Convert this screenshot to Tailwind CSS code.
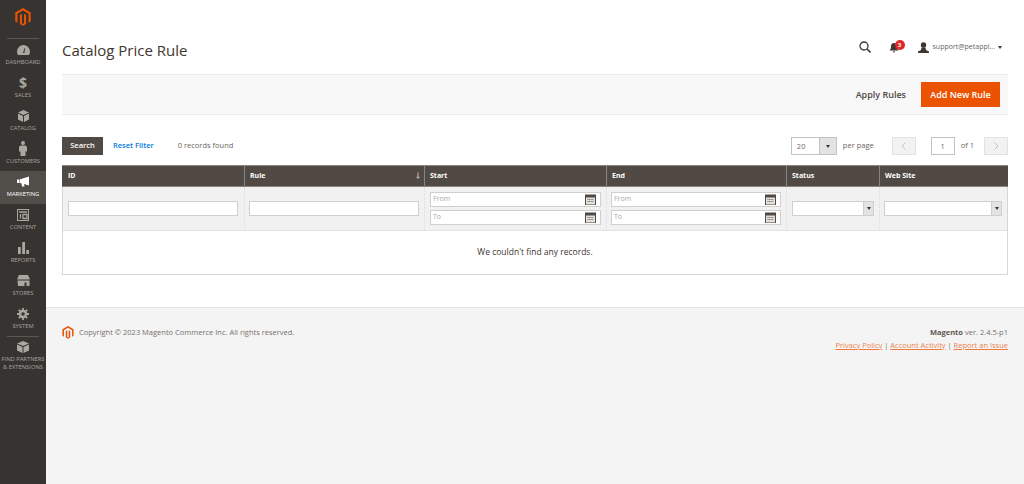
<!DOCTYPE html>
<html lang="en">
<head>
<meta charset="UTF-8">
<title>Catalog Price Rule</title>
<script src="https://cdn.jsdelivr.net/npm/@tailwindcss/browser@4"></script>
</head>
<body class="font-['Open_Sans',sans-serif] bg-white">
<div class="flex h-[484px] w-[1024px] overflow-hidden">
  <!-- Sidebar -->
  <aside class="w-[46px] h-full shrink-0 bg-[#373330] flex flex-col text-[#aaa6a0] text-[5.800px] leading-[8px] text-center">
    <div class="h-[39px] mx-[7px] border-b border-[#5a5652] flex justify-center pt-[8px]">
      <svg class="w-[16px] h-[18px]" viewBox="0 0 24 28" fill="#eb5202"><path d="M12 0L0 7v14l3.300 1.900V8.900L12 3.900l8.700 5v14L24 21V7z"/><path d="M13.600 23.900L12 24.800l-1.600-.9V8.900L7.200 10.800v14L12 27.600l4.800-2.800v-14l-3.200-1.900z"/></svg>
    </div>
    <div class="h-[33px] flex flex-col items-center justify-end pb-[6px]">
      <svg class="w-[13px] h-[10px] mb-[3px]" viewBox="0 0 13 10" fill="#aaa6a0"><path d="M6.500 0A6.500 6.500 0 0 0 0 6.500C0 8 .5 9 1 10h11c.5-1 1-2 1-3.500A6.500 6.500 0 0 0 6.500 0zM6 8L7.500 3 8 3 7.500 8z"/></svg>
      <span>DASHBOARD</span>
    </div>
    <div class="h-[33px] flex flex-col items-center justify-end pb-[6px]">
      <span class="text-[14px] leading-[14px] font-bold mb-[1px]">$</span>
      <span>SALES</span>
    </div>
    <div class="h-[33px] flex flex-col items-center justify-end pb-[6px]">
      <svg class="w-[11px] h-[12px] mb-[2px]" viewBox="0 0 11 12" fill="#aaa6a0"><path d="M5.500 0L0 2.500l5.500 2.500L11 2.500zM0 3.500V9.500L5 12V6zM11 3.500V9.500L6 12V6z"/></svg>
      <span>CATALOG</span>
    </div>
    <div class="h-[33px] flex flex-col items-center justify-end pb-[6px]">
      <svg class="w-[8px] h-[15px] mb-[1px]" viewBox="0 0 8 15" fill="#aaa6a0"><circle cx="4" cy="2" r="2"/><path d="M1.500 4.500h5L8 6v4.500H6.500V15h-5v-4.500H0V6z"/></svg>
      <span>CUSTOMERS</span>
    </div>
    <div class="h-[33px] bg-[#514d49] text-white flex flex-col items-center justify-end pb-[6px]">
      <svg class="w-[13px] h-[11px] mb-[3px]" viewBox="0 0 13 11" fill="#fff"><path d="M0 3.500h2V7H0zM2.500 3.500L12 .5v9L7 8l.5 2.500H5L4.500 7.300 2.500 7z"/></svg>
      <span>MARKETING</span>
    </div>
    <div class="h-[33px] flex flex-col items-center justify-end pb-[6px]">
      <svg class="w-[12px] h-[12px] mb-[2px]" viewBox="0 0 12 12" fill="none" stroke="#aaa6a0"><rect x=".5" y=".5" width="11" height="11"/><path d="M2 3h8M3.500 5v4.500M6 5.500h4V9.500H6z" stroke-width="1.300"/></svg>
      <span>CONTENT</span>
    </div>
    <div class="h-[33px] flex flex-col items-center justify-end pb-[6px]">
      <svg class="w-[11px] h-[12px] mb-[2px]" viewBox="0 0 11 12" fill="#aaa6a0"><path d="M0 5h2.800v7H0zM4.200 0H7v12H4.200zM8.300 8H11v4H8.300z"/></svg>
      <span>REPORTS</span>
    </div>
    <div class="h-[33px] flex flex-col items-center justify-end pb-[6px]">
      <svg class="w-[13px] h-[11px] mb-[3px]" viewBox="0 0 13 11" fill="#aaa6a0"><path d="M2 0h9l2 4.500H0zM.5 5.500h12V11h-3V7.500h-2V11h-6.500z"/></svg>
      <span>STORES</span>
    </div>
    <div class="h-[33px] flex flex-col items-center justify-end pb-[6px]">
      <svg class="w-[12px] h-[12px] mb-[2px]" viewBox="0 0 12 12" fill="none" stroke="#aaa6a0"><circle cx="6" cy="6" r="3" stroke-width="2.400"/><path d="M6 0v2.500M6 9.500V12M0 6h2.500M9.500 6H12M1.800 1.800l1.800 1.800M8.400 8.400l1.800 1.800M1.800 10.200l1.800-1.800M8.400 3.600l1.800-1.800" stroke-width="1.800"/></svg>
      <span>SYSTEM</span>
    </div>
    <div class="mx-[7px] border-t border-[#5a5652]"></div>
    <div class="flex flex-col items-center pt-[4px]">
      <svg class="w-[12px] h-[12px] mb-[2px]" viewBox="0 0 12 12" fill="#aaa6a0"><path d="M6 0L0 2.500l6 2.500 6-2.500zM0 3.500V9.500L5.500 12V6zM12 3.500V9.500L6.500 12V6z"/></svg>
      <span>FIND PARTNERS</span>
      <span>&amp; EXTENSIONS</span>
    </div>
  </aside>

  <!-- Main -->
  <main class="w-[978px] shrink-0 flex flex-col">
    <div class="px-[16px] flex-none">
      <header class="h-[74px] flex items-center justify-between pt-[20px]">
        <h1 class="text-[15px] leading-[24px] text-[#41362f] mt-[6px]">Catalog Price Rule</h1>
        <div class="flex items-center pr-[6px]">
          <svg class="w-[12px] h-[12px] mr-[18px]" viewBox="0 0 12 12" fill="none" stroke="#41362f" stroke-width="1.300"><circle cx="5" cy="5" r="4"/><path d="M8 8l3.500 3.500" stroke-width="1.600"/></svg>
          <div class="relative w-[17px] mr-[12px] h-[12px]">
            <svg class="w-[10px] h-[10px] absolute left-0 top-[2px]" viewBox="0 0 10 10" fill="#41362f"><path d="M5 0C3 0 2 1.500 2 3.500 2 5.500 1.500 6.500 .5 7.500h9C8.500 6.500 8 5.500 8 3.500 8 1.500 7 0 5 0zM3.800 8.300h2.400L5 10z"/></svg>
            <span class="absolute left-[6px] -top-[1px] w-[10px] h-[10px] rounded-full bg-[#e22626] text-white text-[6px] leading-[10px] font-bold text-center">3</span>
          </div>
          <svg class="w-[11px] h-[11px] mr-[4px]" viewBox="0 0 11 11" fill="#41362f"><circle cx="5.500" cy="3" r="2.700"/><path d="M3.500 5.500h4L8 8l3 1.500V11H0V9.500L3 8z"/></svg>
          <span class="text-[7px] leading-[10px] text-[#6b6560] mr-[3px]">support@petappl...</span>
          <span class="w-0 h-0 border-x-[2.500px] border-t-[3px] border-x-transparent border-t-[#41362f]"></span>
        </div>
      </header>

      <div class="h-[41px] bg-[#f8f8f8] border-y border-[#ececec] flex items-center justify-end pr-[8px]">
        <span class="text-[9px] font-semibold text-[#514943] mr-[15px]">Apply Rules</span>
        <span class="w-[79px] h-[25px] bg-[#eb5202] border border-[#eb5202] text-white text-[9px] font-semibold flex items-center justify-center">Add New Rule</span>
      </div>

      <div class="h-[50px] flex items-center justify-between text-[7.500px] pt-[12px]">
        <div class="flex items-center">
          <span class="w-[41px] h-[18px] bg-[#514943] text-white font-semibold flex items-center justify-center">Search</span>
          <span class="ml-[10px] text-[#007bdb] font-semibold">Reset Filter</span>
          <span class="ml-[24px] text-[#6d6662]">0 records found</span>
        </div>
        <div class="flex items-center text-[#6d6662]">
          <div class="flex w-[46px] h-[18px] border border-[#c2c2c2]">
            <span class="w-[27px] pl-[5px] leading-[16px]">20</span>
            <span class="flex-1 bg-[#e3e3e3] flex items-center justify-center border-l border-[#c2c2c2]"><span class="w-0 h-0 border-x-[2.500px] border-t-[3px] border-x-transparent border-t-[#41362f]"></span></span>
          </div>
          <span class="ml-[6px]">per page</span>
          <span class="ml-[18px] w-[24px] h-[18px] bg-[#f2f2f2] border border-[#e3e3e3] flex items-center justify-center">
            <svg class="w-[5px] h-[8px]" viewBox="0 0 5 8" fill="none" stroke="#c2c2c2"><path d="M4.500 .5L1 4l3.500 3.500"/></svg>
          </span>
          <span class="ml-[15px] w-[24px] h-[18px] border border-[#c2c2c2] text-center leading-[16px]">1</span>
          <span class="ml-[6px]">of 1</span>
          <span class="ml-[10px] w-[24px] h-[18px] bg-[#f2f2f2] border border-[#e3e3e3] flex items-center justify-center">
            <svg class="w-[5px] h-[8px]" viewBox="0 0 5 8" fill="none" stroke="#c2c2c2"><path d="M.5 .5L4 4 .5 7.500"/></svg>
          </span>
        </div>
      </div>

      <!-- Grid -->
      <div class="grid grid-cols-[181px_180px_182px_180px_93px_128px] border-x border-[#d6d6d6] text-[7px]">
        <div class="col-span-6 grid grid-cols-subgrid bg-[#514943] text-white font-bold h-[22px] border-y border-[#8a837e] -mx-px pl-px pr-px">
          <div class="px-[5px] leading-[20px]">ID</div>
          <div class="pl-[5px] pr-[4px] leading-[20px] border-l border-[#8a837e] flex justify-between items-center"><span>Rule</span><svg class="w-[4px] h-[7px] -mt-[2px]" viewBox="0 0 5 8" fill="none" stroke="#fff" stroke-width=".8"><path d="M2.500 0v7.500M.5 5.500l2 2 2-2"/></svg></div>
          <div class="px-[5px] leading-[20px] border-l border-[#8a837e]">Start</div>
          <div class="px-[5px] leading-[20px] border-l border-[#8a837e]">End</div>
          <div class="px-[5px] leading-[20px] border-l border-[#8a837e]">Status</div>
          <div class="px-[5px] leading-[20px] border-l border-[#8a837e]">Web Site</div>
        </div>
        <div class="col-span-6 grid grid-cols-subgrid bg-[#f1f1f1] h-[44px] border-b border-[#e3e3e3]">
          <div class="px-[5px] flex items-center"><div class="w-[170px] h-[15px] bg-white border border-[#cfcfcf]"></div></div>
          <div class="pl-[4px] flex items-center border-l border-dotted border-[#dcdcdc]"><div class="w-[170px] h-[15px] bg-white border border-[#cfcfcf]"></div></div>
          <div class="px-[5px] flex flex-col justify-center gap-[3px] border-l border-dotted border-[#dcdcdc] text-[#a9a9a9]">
            <div class="h-[15px] bg-white border border-[#cfcfcf] pl-[2px] pr-[4px] flex items-center justify-between"><span>From</span><svg class="w-[11px] h-[11px]" viewBox="0 0 11 11"><rect x=".5" y="1" width="10" height="10" fill="#e3e0dc" stroke="#514943"/><path d="M0 1h11v2.500H0z" fill="#514943"/><path d="M2.500 5.500h6M2.500 7.500h6" stroke="#77706b" stroke-dasharray="1 .6"/></svg></div>
            <div class="h-[15px] bg-white border border-[#cfcfcf] pl-[2px] pr-[4px] flex items-center justify-between"><span>To</span><svg class="w-[11px] h-[11px]" viewBox="0 0 11 11"><rect x=".5" y="1" width="10" height="10" fill="#e3e0dc" stroke="#514943"/><path d="M0 1h11v2.500H0z" fill="#514943"/><path d="M2.500 5.500h6M2.500 7.500h6" stroke="#77706b" stroke-dasharray="1 .6"/></svg></div>
          </div>
          <div class="pl-[4px] pr-[5px] flex flex-col justify-center gap-[3px] border-l border-dotted border-[#dcdcdc] text-[#a9a9a9]">
            <div class="h-[15px] bg-white border border-[#cfcfcf] pl-[2px] pr-[4px] flex items-center justify-between"><span>From</span><svg class="w-[11px] h-[11px]" viewBox="0 0 11 11"><rect x=".5" y="1" width="10" height="10" fill="#e3e0dc" stroke="#514943"/><path d="M0 1h11v2.500H0z" fill="#514943"/><path d="M2.500 5.500h6M2.500 7.500h6" stroke="#77706b" stroke-dasharray="1 .6"/></svg></div>
            <div class="h-[15px] bg-white border border-[#cfcfcf] pl-[2px] pr-[4px] flex items-center justify-between"><span>To</span><svg class="w-[11px] h-[11px]" viewBox="0 0 11 11"><rect x=".5" y="1" width="10" height="10" fill="#e3e0dc" stroke="#514943"/><path d="M0 1h11v2.500H0z" fill="#514943"/><path d="M2.500 5.500h6M2.500 7.500h6" stroke="#77706b" stroke-dasharray="1 .6"/></svg></div>
          </div>
          <div class="px-[5px] flex items-center border-l border-dotted border-[#dcdcdc]">
            <div class="w-full h-[15px] bg-white border border-[#cfcfcf] flex justify-end"><span class="w-[10px] bg-[#e3e3e3] border-l border-[#cfcfcf] flex items-center justify-center"><span class="w-0 h-0 border-x-[2px] border-t-[3px] border-x-transparent border-t-[#41362f]"></span></span></div>
          </div>
          <div class="pl-[4px] pr-[5px] flex items-center border-l border-dotted border-[#dcdcdc]">
            <div class="w-full h-[15px] bg-white border border-[#cfcfcf] flex justify-end"><span class="w-[10px] bg-[#e3e3e3] border-l border-[#cfcfcf] flex items-center justify-center"><span class="w-0 h-0 border-x-[2px] border-t-[3px] border-x-transparent border-t-[#41362f]"></span></span></div>
          </div>
        </div>
        <div class="col-span-6 h-[44px] flex items-center justify-center text-[8.500px] text-[#41362f] border-b border-[#d6d6d6]">We couldn't find any records.</div>
      </div>
    </div>

    <!-- Footer -->
    <footer class="mt-[32px] flex-1 bg-[#f4f4f4] border-t border-[#e3e3e3] px-[16px] pt-[18px] flex justify-between text-[7.500px] text-[#77706b]">
      <div class="flex items-start">
        <svg class="w-[12px] h-[13px] mr-[5px]" viewBox="0 0 24 28" fill="#eb5202"><path d="M12 0L0 7v14l3.300 1.900V8.900L12 3.900l8.700 5v14L24 21V7z"/><path d="M13.600 23.900L12 24.800l-1.600-.9V8.900L7.200 10.800v14L12 27.600l4.800-2.800v-14l-3.200-1.900z"/></svg>
        <span class="leading-[13px]">Copyright © 2023 Magento Commerce Inc. All rights reserved.</span>
      </div>
      <div class="text-right leading-[12.500px]">
        <div><span class="font-bold text-[#5f5853]">Magento</span> ver. 2.4.5-p1</div>
        <div class="text-[#eb5202]/75"><span class="underline">Privacy Policy</span> <span class="text-[#77706b]">|</span> <span class="underline">Account Activity</span> <span class="text-[#77706b]">|</span> <span class="underline">Report an Issue</span></div>
      </div>
    </footer>
  </main>
</div>
</body>
</html>
